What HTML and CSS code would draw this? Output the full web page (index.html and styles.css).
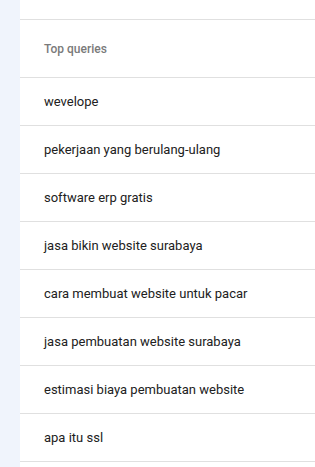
FILE: index.html
```html
<!DOCTYPE html>
<html>
<head>
<meta charset="utf-8">
<link rel="stylesheet" href="styles.css">
</head>
<body>
<div class="panel">
  <div class="top-space"></div>
  <div class="header">Top queries</div>
  <ul class="list">
    <li class="row">wevelope</li>
    <li class="row">pekerjaan yang berulang-ulang</li>
    <li class="row">software erp gratis</li>
    <li class="row">jasa bikin website surabaya</li>
    <li class="row">cara membuat website untuk pacar</li>
    <li class="row">jasa pembuatan website surabaya</li>
    <li class="row">estimasi biaya pembuatan website</li>
    <li class="row">apa itu ssl</li>
    <li class="row"></li>
  </ul>
</div>
</body>
</html>
```
FILE: styles.css
```css
html, body {
  margin: 0;
  padding: 0;
  height: 100%;
  overflow: hidden;
}
body {
  background: #f0f4fc;
  font-family: Roboto, "Noto Sans", sans-serif;
}
.panel {
  margin-left: 20px;
  background: #ffffff;
  min-height: 100%;
}
.top-space {
  height: 19px;
  border-bottom: 1px solid #e0e0e0;
}
.header {
  height: 58px;
  box-sizing: border-box;
  display: flex;
  align-items: center;
  padding-left: 24px;
  font-size: 12px;
  font-weight: 500;
  color: #7a7a7a;
  border-bottom: 1px solid #e0e0e0;
}
.list {
  list-style: none;
  margin: 0;
  padding: 0;
}
.row {
  height: 48px;
  box-sizing: border-box;
  display: flex;
  align-items: center;
  padding-left: 24px;
  padding-bottom: 1px;
  font-size: 13px;
  color: #212121;
  border-bottom: 1px solid #e0e0e0;
}
```
